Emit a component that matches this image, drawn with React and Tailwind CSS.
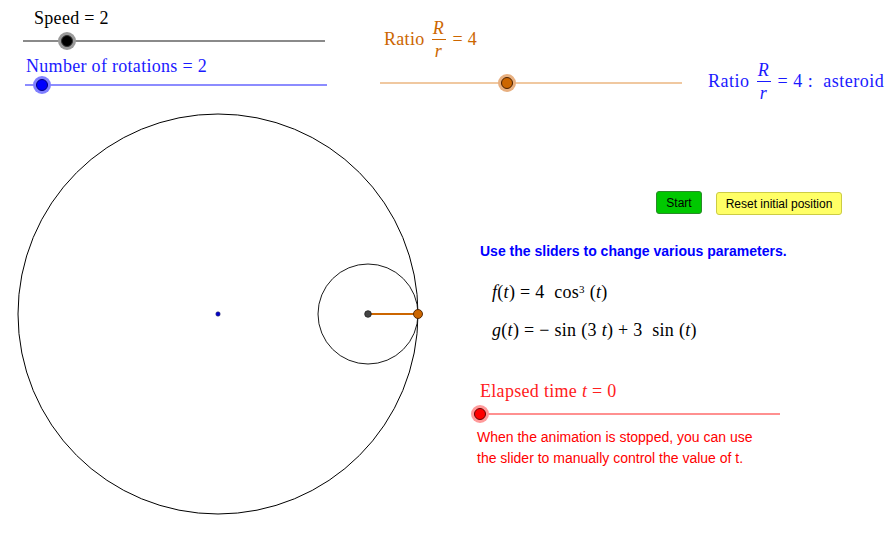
import React from "react";

const SERIF = "font-['Liberation_Serif','DejaVu_Serif',serif]";
const SANS = "font-['Liberation_Sans',Arial,sans-serif]";

function Slider({ widthClass, trackClass, haloClass, knobClass, pos }) {
  return (
    <div className={`relative h-[18px] flex items-center ${widthClass}`}>
      <div className={`h-[2px] w-full ${trackClass}`} />
      <div
        className={`absolute top-0 w-[18px] h-[18px] rounded-full flex items-center justify-center ${haloClass}`}
        style={{ left: pos - 9 }}
      >
        <div className={`w-[12px] h-[12px] rounded-full border ${knobClass}`} />
      </div>
    </div>
  );
}

function Frac({ lineClass }) {
  return (
    <span className="inline-flex flex-col items-center mx-[7px] leading-[18px]">
      <span className="italic pb-[2px]">R</span>
      <span className={`block h-px w-[14px] ${lineClass}`} />
      <span className="italic pt-[2px]">r</span>
    </span>
  );
}

export default function App() {
  return (
    <div className={`w-[893px] h-[541px] bg-white overflow-hidden flex flex-col ${SERIF}`}>
      {/* Top row */}
      <div className="h-[110px] flex items-start text-[18px] tracking-[0.3px]">
        {/* Speed + rotations */}
        <div className="ml-[23px] w-[304px] pt-[8px] flex flex-col">
          <div className="pl-[11px] h-[21px] leading-[21px] text-black">Speed = 2</div>
          <Slider
            widthClass="w-[302px] mt-[3px]"
            trackClass="bg-[#8a8a8a]"
            haloClass="bg-[#9a9a9a]"
            knobClass="bg-black border-[#333]"
            pos={44}
          />
          <div className="pl-[3px] mt-[6px] h-[20px] leading-[20px] text-[#1a1aff]">Number of rotations = 2</div>
          <div className="pl-[2px]">
            <Slider
              widthClass="w-[302px]"
              trackClass="bg-[#8c8cff]"
              haloClass="bg-[#8080ff]"
              knobClass="bg-[#0000ff] border-[#00007a]"
              pos={17}
            />
          </div>
        </div>

        {/* Ratio orange */}
        <div className="ml-[53px] w-[302px] pt-[17px] flex flex-col text-[#cc6600]">
          <div className="pl-[4px] h-[44px] flex items-center whitespace-nowrap">
            <span>Ratio</span>
            <Frac lineClass="bg-[#cc6600]" />
            <span>= 4</span>
          </div>
          <div className="mt-[13px]">
            <Slider
              widthClass="w-[302px]"
              trackClass="bg-[#f0c8a0]"
              haloClass="bg-[#e8b080]"
              knobClass="bg-[#cc6600] border-[#4a2000]"
              pos={127}
            />
          </div>
        </div>

        {/* Ratio asteroid */}
        <div className="ml-[26px] pt-[59px] text-[#1a1aff]">
          <div className="h-[44px] flex items-center whitespace-nowrap tracking-[0.5px]">
            <span>Ratio</span>
            <Frac lineClass="bg-[#1a1aff]" />
            <span>= 4 :&nbsp; asteroid</span>
          </div>
        </div>
      </div>

      {/* Bottom row */}
      <div className="flex-1 flex items-start">
        <svg width="440" height="431" className="shrink-0">
          <circle cx="218" cy="204" r="200" fill="none" stroke="#000" strokeWidth="1" />
          <circle cx="368" cy="204" r="50" fill="none" stroke="#1a1a1a" strokeWidth="1" />
          <line x1="368" y1="204" x2="418" y2="204" stroke="#cc6600" strokeWidth="2" />
          <circle cx="368" cy="204" r="3.3" fill="#444" stroke="#222" strokeWidth="0.8" />
          <circle cx="418" cy="204" r="4.5" fill="#cc6600" stroke="#4a2000" strokeWidth="0.9" />
          <circle cx="218" cy="204" r="2.2" fill="#0000cc" stroke="#333366" strokeWidth="0.6" />
        </svg>

        <div className="ml-[37px] pt-[81px] flex flex-col">
          <div className={`pl-[179px] flex items-start gap-[14px] ${SANS}`}>
            <button className="w-[46px] h-[23px] rounded-[3px] bg-[#00c800] border border-[#2a8a2a] text-[12px] text-black">
              Start
            </button>
            <button className="w-[126px] h-[23px] mt-px rounded-[3px] bg-[#ffff66] border border-[#cccc44] text-[12px] text-black">
              Reset initial position
            </button>
          </div>

          <div className={`pl-[3px] mt-[28px] h-[16px] leading-[16px] text-[14px] font-bold text-[#0000ff] ${SANS}`}>
            Use the sliders to change various parameters.
          </div>

          <div className="pl-[15px] mt-[22px] h-[22px] leading-[22px] text-[18px] tracking-[0.3px] text-black whitespace-nowrap">
            <i>f</i>(<i>t</i>) = 4&nbsp; cos<sup className="text-[11px]">3</sup> (<i>t</i>)
          </div>
          <div className="pl-[15px] mt-[16px] h-[22px] leading-[22px] text-[18px] tracking-[0.3px] text-black whitespace-nowrap">
            <i>g</i>(<i>t</i>) = − sin (3 <i>t</i>) + 3&nbsp; sin (<i>t</i>)
          </div>

          <div className="pl-[3px] mt-[39px] h-[22px] leading-[22px] text-[18px] tracking-[0.3px] text-[#ff2020] whitespace-nowrap">
            Elapsed time <i>t</i> = 0
          </div>
          <div className="pl-[3px] mt-[3px]">
            <Slider
              widthClass="w-[300px]"
              trackClass="bg-[#ff9090]"
              haloClass="bg-[#ff9a9a]"
              knobClass="bg-[#ff0000] border-[#660000]"
              pos={0}
            />
          </div>
          <div className={`mt-[4px] text-[14px] leading-[21px] text-[#ff0000] ${SANS}`}>
            When the animation is stopped, you can use
            <br />
            the slider to manually control the value of t.
          </div>
        </div>
      </div>
    </div>
  );
}
